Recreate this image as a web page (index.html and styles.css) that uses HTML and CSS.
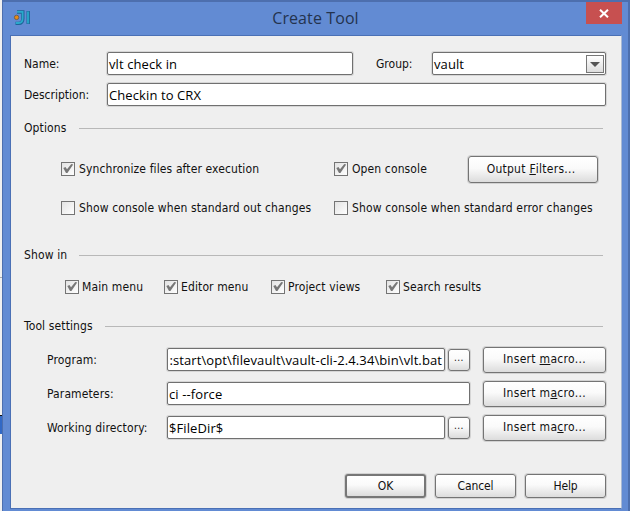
FILE: index.html
```
<!DOCTYPE html>
<html lang="en">
<head>
<meta charset="utf-8">
<title>Create Tool</title>
<link rel="stylesheet" href="styles.css">
</head>
<body>
<svg class="defs" width="0" height="0"><defs>
<linearGradient id="box" x1="0" y1="0" x2="1" y2="1"><stop offset="0" stop-color="#e2e2e2"/><stop offset="1" stop-color="#fff"/></linearGradient>
<symbol id="off" viewBox="0 0 14 14"><rect x=".5" y=".5" width="13" height="13" fill="url(#box)" stroke="#747474"/></symbol>
<symbol id="on" viewBox="0 0 14 14"><rect x=".5" y=".5" width="13" height="13" fill="url(#box)" stroke="#747474"/><path d="M2.3 6 L4.5 5 L6 7.2 L10.3 2 L12.2 2.6 L6.4 11 L5 11 Z" fill="#777"/></symbol>
</defs></svg>
<div class="screen">
<div class="backdrop"><i class="hair"></i><i class="selected"></i></div>
<section class="window">
  <header class="titlebar">
    <svg class="logo" width="18" height="18" viewBox="0 0 18 18"><path d="M4 3H9.8V9.5Q9.8 14.4 5.6 14.4H2.5M15.2 2V15" fill="none" stroke="#1c6598" stroke-width="3.4"/><path d="M4 2.8H9.6V9.5Q9.6 14 5.6 14H2.8M15 2.4V14.6" fill="none" stroke="#2aa9cc" stroke-width="1.8"/><circle cx="3.6" cy="8.4" r="2.2" fill="#e98a13" stroke="#75614d"/></svg>
    <h1>Create Tool</h1>
    <div class="close"><svg width="10" height="9" viewBox="0 0 10 9"><path d="M1 .7 9 8.3M9 .7 1 8.3" stroke="#fff" stroke-width="2"/></svg></div>
  </header>
  <main class="panel">
    <div class="row name-row"><label class="cap">Name:</label><div class="field name">vlt check in</div><label class="group-cap">Group:</label><div class="field group"><span>vault</span><b class="drop"><svg width="10" height="5" viewBox="0 0 10 5"><path d="M0 0H10L5 5Z" fill="#555"/></svg></b></div></div>
    <div class="row desc-row"><label class="cap">Description:</label><div class="field desc">Checkin to CRX</div></div>
    <div class="rule options"><span>Options</span><hr></div>
    <div class="row checks first"><label class="check left"><svg><use href="#on"/></svg><span>Synchronize files after execution</span></label><label class="check"><svg><use href="#on"/></svg><span>Open console</span></label><div class="button filters">Output&nbsp;<u>F</u>ilters...</div></div>
    <div class="row checks second"><label class="check left"><svg><use href="#off"/></svg><span>Show console when standard out changes</span></label><label class="check"><svg><use href="#off"/></svg><span>Show console when standard error changes</span></label></div>
    <div class="rule show"><span>Show in</span><hr></div>
    <div class="row places"><label class="check p1"><svg><use href="#on"/></svg><span>Main menu</span></label><label class="check p2"><svg><use href="#on"/></svg><span>Editor menu</span></label><label class="check p3"><svg><use href="#on"/></svg><span>Project views</span></label><label class="check"><svg><use href="#on"/></svg><span>Search results</span></label></div>
    <div class="rule tool"><span>Tool settings</span><hr></div>
    <div class="row setting program"><label>Program:</label><div class="field short path"><span>:start\opt\filevault\vault-cli-2.4.34\bin\vlt.bat</span></div><div class="button dots">...</div><div class="button macro">Insert&nbsp;<u>m</u>acro...</div></div>
    <div class="row setting"><label>Parameters:</label><div class="field long">ci --force</div><div class="button macro">Insert m<u>a</u>cro...</div></div>
    <div class="row setting"><label>Working directory:</label><div class="field short">$FileDir$</div><div class="button dots">...</div><div class="button macro">Insert ma<u>c</u>ro...</div></div>
    <footer class="actions"><div class="button ok">OK</div><div class="button">Cancel</div><div class="button">Help</div></footer>
  </main>
</section>
</div>
</body>
</html>
```
FILE: styles.css
```
* { box-sizing: border-box; }
body { margin: 0; background: #fff; font: 12px "DejaVu Sans Condensed", "DejaVu Sans", sans-serif; font-stretch: condensed; letter-spacing: .12px; color: #111; }
.defs { position: absolute; }
.screen { width: 633px; height: 511px; display: flex; overflow: hidden; }
.backdrop { width: 2px; background: #f0f0f0; display: flex; flex-direction: column; }
.hair { height: 1px; margin-top: 277px; background: #aaa; }
.selected { height: 19px; margin-top: 137px; background: #3269c5; border-top: 1px solid #111; }
.window { width: 628px; height: 511px; background: #628bd3; border: solid #4d6fae; border-width: 2px 2px 0 1px; padding: 0 6px 2px 7px; }
.titlebar { height: 33px; display: flex; }
.logo { margin: 7px 0 0 3px; }
h1 { margin: 5px 0 0; flex: 1; padding-left: 14px; text-align: center; font: 16px/23px "Open Sans", sans-serif; letter-spacing: .1px; color: #24334e; }
.close { width: 36px; height: 22px; background: #c75050; display: flex; align-items: center; justify-content: center; }
.panel { height: 474px; background: #efefef; border: 1px solid #4a70b5; border-right-color: #a8b8d4; padding: 16px 15px 0 13px; display: flex; flex-direction: column; }
.row { display: flex; align-items: center; white-space: nowrap; }
.field { height: 23px; background: #fff; border: 1px solid #707070; border-radius: 2px; box-shadow: 0 0 0 1px #d6d6d6; padding: 1px 1px 0; overflow: hidden; display: flex; align-items: center; font: 13px "Open Sans", sans-serif; letter-spacing: .1px; color: #000; }
.name-row { height: 23px; }
.cap { width: 83px; letter-spacing: 0; }
.name { width: 246px; }
.group-cap { margin-left: 23px; width: 56px; letter-spacing: 0; }
.group { width: 174px; justify-content: space-between; }
.drop { width: 18px; height: 18px; border: 1px solid #777; background: linear-gradient(#fff, #ddd); display: flex; align-items: center; justify-content: center; }
.desc-row { height: 23px; margin-top: 8px; }
.desc { width: 499px; }
.rule { display: flex; align-items: center; height: 16px; gap: 12px; padding-right: 3px; }
.rule hr { flex: 1; margin: 0; border: 0; height: 1px; background: #b8b8b8; }
.options { margin-top: 14px; }
.check { display: flex; align-items: center; gap: 3px; }
.check svg { width: 14px; height: 14px; }
.checks .left { width: 273px; }
.checks { padding-left: 37px; }
.checks .check { gap: 4px; }
.first { height: 28px; margin-top: 19px; }
.filters { width: 130px; height: 27px; margin: 0 8px 0 auto; padding-right: 4px; letter-spacing: .25px; }
.second { height: 16px; margin-top: 17px; }
.show { margin-top: 31px; }
.places { height: 16px; margin-top: 16px; padding-left: 41px; }
.p1 { width: 99px; } .p2 { width: 107px; } .p3 { width: 115px; }
.tool { margin-top: 23px; }
.setting { height: 27px; margin: 11px 0 -4px; padding-left: 23px; }
.program { margin-top: 12px; }
.setting label { width: 120px; }
.short { width: 278px; }
.long { width: 303px; }
.path { justify-content: flex-end; padding-right: 2px; }
.button { border: 1px solid #747474; border-radius: 3px; background: linear-gradient(#fff, #fafafa 45%, #dcdcdc); display: flex; align-items: center; justify-content: center; box-shadow: 0 0 0 1px #d2d2d2; }
.dots { width: 22px; height: 22px; margin-left: 3px; font-size: 10px; padding-bottom: 5px; letter-spacing: .4px; }
.macro { width: 123px; height: 26px; margin-left: auto; padding-bottom: 1px; letter-spacing: .3px; }
.actions { display: flex; justify-content: flex-end; gap: 9px; margin-top: 37px; }
.actions .button { width: 81px; height: 24px; padding-bottom: 1px; letter-spacing: -.1px; }
.actions .ok { border: 2px solid #777; }
```
